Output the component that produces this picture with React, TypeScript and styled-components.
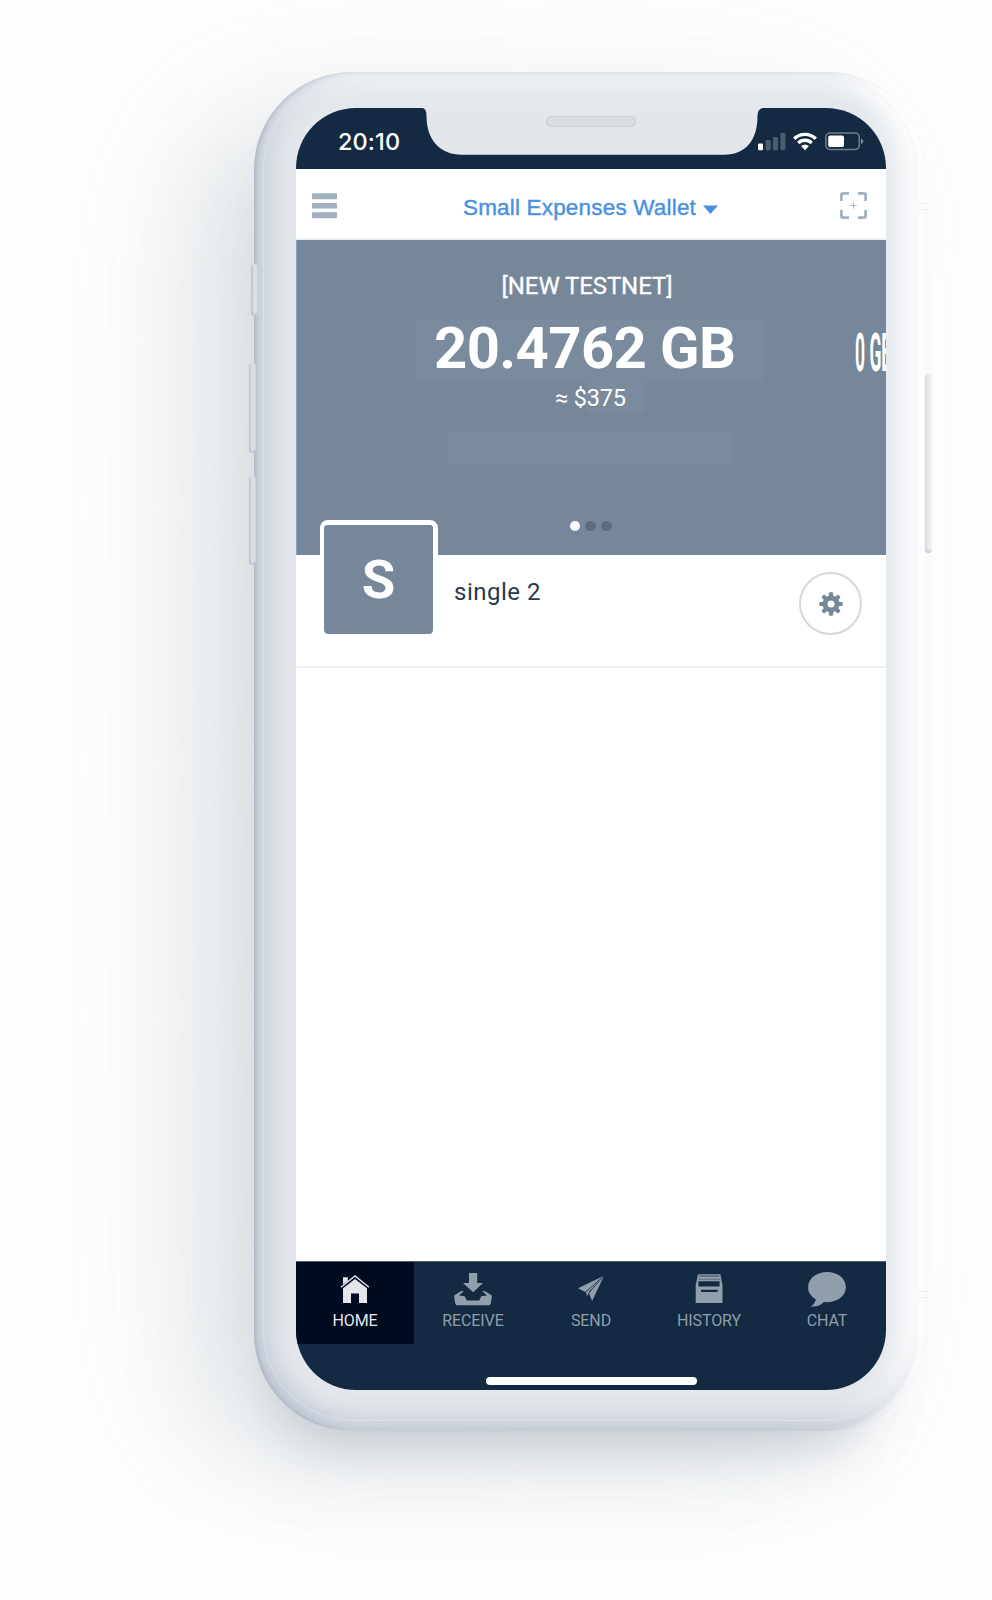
import React from "react";
import styled, { createGlobalStyle } from "styled-components";

const Global = createGlobalStyle`
  * { box-sizing: border-box; }
  body { margin: 0; background: #fefefe; font-family: Roboto, sans-serif; }
`;

const Stage = styled.main`
  width: 992px;
  height: 1600px;
  padding: 72px 0 0 254px;
  overflow: hidden;
`;

const Phone = styled.div`
  position: relative;
  width: 671px;
  height: 1359px;
  padding: 36px 0 0 42px;
  border-radius: 98px;
  background: #e4e8ec;
  box-shadow:
    -70px 40px 100px -20px rgba(140, 152, 165, 0.19),
    -70px 30px 180px -10px rgba(140, 152, 165, 0.15),
    -14px 52px 54px -42px rgba(125, 136, 158, 0.38),
    inset 3px 0 4px -1px rgba(150, 160, 175, 0.55),
    inset -9px 0 5px -2px rgba(255, 255, 255, 0.8),
    inset 16px -4px 26px -2px rgba(176, 185, 201, 0.6),
    inset 0 -20px 24px -8px rgba(182, 189, 203, 0.55),
    inset -28px 0 26px -4px #ffffff,
    inset 0 16px 18px -2px rgba(244, 246, 248, 0.9);

  &::after {
    content: "";
    position: absolute;
    inset: 7px 8px 10px 9px;
    border-radius: 90px;
    border: 1px solid rgba(232, 236, 243, 0.5);
    pointer-events: none;
  }
`;

const SideKey = styled.i<{ $top: number; $height: number; $left: number; $pale?: boolean }>`
  position: absolute;
  left: ${(p) => p.$left}px;
  top: ${(p) => p.$top}px;
  width: 7px;
  height: ${(p) => p.$height}px;
  border-radius: 4px;
  background: ${(p) =>
    p.$pale
      ? "linear-gradient(90deg, #dde1e8, #e6e9ef 50%, #fbfbfc)"
      : "linear-gradient(90deg, #bcc4d0, #dde1e7 45%, #d8dde4)"};
  box-shadow: inset 0 -2px 2px rgba(160, 170, 188, 0.45);
`;

const AntennaBand = styled.i<{ $top: number }>`
  position: absolute;
  right: -3px;
  top: ${(p) => p.$top}px;
  width: 10px;
  height: 7px;
  border: solid #eceef1;
  border-width: 1px 0;
`;

const Screen = styled.div`
  position: relative;
  display: flex;
  flex-direction: column;
  width: 590px;
  height: 1282px;
  overflow: hidden;
  border-radius: 60px;
  background: #fff;
`;

const StatusBar = styled.header`
  display: flex;
  align-items: center;
  height: 61px;
  padding: 5px 22px 0 42px;
  background: #132a42;
  color: #fff;
  flex: none;
`;

const Clock = styled.time`
  flex: 1;
  padding-top: 1px;
  font: 500 23.5px/30px Inter, sans-serif;
  letter-spacing: 0.1px;
`;

const Notch = styled.svg`
  position: absolute;
  left: 126px;
  top: -1px;
`;

const WalletBar = styled.nav`
  display: flex;
  align-items: center;
  justify-content: space-between;
  height: 71px;
  padding: 4px 19px 0 16px;
  border-bottom: 2px solid #edf0f3;
  flex: none;
`;

const WalletName = styled.h1`
  display: flex;
  align-items: center;
  gap: 7px;
  margin: 5px 0 0 4px;
  font: 400 22.5px/30px "Liberation Sans", sans-serif;
  letter-spacing: 0.18px;
  color: #4a90e2;
  -webkit-text-stroke: 0.4px #4a90e2;
  white-space: nowrap;
`;

const Caret = styled.svg`
  margin-top: 3px;
`;

const Balance = styled.section`
  position: relative;
  height: 315px;
  padding-top: 31px;
  background: #768799;
  border-left: 1px solid #86a0be;
  color: #fff;
  flex: none;
`;

const Network = styled.div`
  width: 580px;
  font-size: 24px;
  font-weight: 400;
  letter-spacing: -0.1px;
  line-height: 30px;
  text-align: center;
  -webkit-text-stroke: 0.3px #fff;
`;

const Amount = styled.div`
  width: 348px;
  height: 62px;
  margin: 19px 0 0 119px;
  padding-left: 18px;
  background: #7a8b9d;
  font-size: 58px;
  font-weight: 700;
  letter-spacing: -0.6px;
  line-height: 56px;
  white-space: nowrap;
`;

const Fiat = styled.div`
  display: flex;
  width: max-content;
  height: 30px;
  margin-left: 258px;
  font-size: 23.5px;
  letter-spacing: -0.2px;
  line-height: 32px;
  white-space: pre;
`;

const FiatValue = styled.span`
  width: 58px;
  background: #7a8b9d;
`;

const Placeholder = styled.div`
  width: 284px;
  height: 32px;
  margin: 20px 0 0 151px;
  background: #7a8b9d;
`;

const Dots = styled.div`
  display: flex;
  gap: 5px;
  margin: 56.5px 0 0 272.7px;
`;

const Dot = styled.i<{ $on?: boolean }>`
  width: 10.8px;
  height: 10.8px;
  border-radius: 50%;
  background: ${(p) => (p.$on ? "#fff" : "#5b6c7f")};
`;

const NextAmount = styled.div`
  position: absolute;
  left: 558px;
  top: 83px;
  font-size: 53px;
  font-weight: 700;
  line-height: 60px;
  white-space: nowrap;
  transform: scaleX(0.33);
  transform-origin: 0 50%;
`;

const Account = styled.section`
  position: relative;
  display: flex;
  align-items: flex-start;
  height: 113px;
  padding: 0 24px 0 24px;
  border-bottom: 2px solid #eceef0;
  flex: none;
`;

const Avatar = styled.div`
  width: 118px;
  height: 118px;
  margin-top: -35px;
  border: solid #fff;
  border-width: 5px 5px 4px 4px;
  border-radius: 8px;
  background: #768799;
  background-clip: padding-box;
  box-shadow: inset 0 0 0 1px #fff0;
  color: #fff;
  font-size: 54.5px;
  font-weight: 700;
  line-height: 108px;
  text-align: center;
`;

const AccountName = styled.div`
  flex: 1;
  padding: 21px 0 0 16px;
  font-size: 24px;
  line-height: 32px;
  letter-spacing: 0.5px;
  color: #25394f;
`;

const GearButton = styled.button`
  display: grid;
  place-items: center;
  width: 63px;
  height: 63px;
  margin-top: 17px;
  padding: 0;
  border: 2px solid #d3d8df;
  border-radius: 50%;
  background: #fff;
`;

const Content = styled.div`
  flex: 1;
`;

const TabBar = styled.footer`
  display: grid;
  grid-template-columns: repeat(5, 1fr);
  align-items: start;
  height: 129px;
  border-top: 1px solid #50616f;
  background: #132a42;
  position: relative;
`;

const Tab = styled.a<{ $active?: boolean }>`
  display: flex;
  flex-direction: column;
  align-items: center;
  height: 82px;
  padding-top: 8px;
  background: ${(p) => (p.$active ? "#000a20" : "transparent")};
  color: ${(p) => (p.$active ? "#e3e7eb" : "#919eac")};
  font-size: 16px;
  line-height: 22px;
`;

const TabLabel = styled.span`
  margin-top: 2px;
  letter-spacing: -0.1px;
`;

const HomeIndicator = styled.i`
  position: absolute;
  left: 190px;
  bottom: 5px;
  width: 211px;
  height: 8px;
  border-radius: 4px;
  background: #fff;
`;

const gearTeeth = [0, 45, 90, 135, 180, 225, 270, 315];

const tabs = [
  {
    label: "HOME",
    art: (
      <g>
        <path d="M8 18.3 20 9l12 9.3V33h-8v-9.6h-8V33H8z" />
        <path d="M6 17.3 20 6l14 11.3" fill="none" stroke="currentColor" strokeWidth="1.4" />
        <path d="M8 7.2h4.8v3.7L8 14.6z" />
      </g>
    ),
  },
  {
    label: "RECEIVE",
    art: (
      <g>
        <path d="M16 3h8.2v10H30L20.2 22.3 10 13h6z" />
        <path d="M10.8 21H8.4L1.8 25Q1 25.600 1.200 27L2 32.500Q2.300 35.200 4.600 35.200H35.400Q37.700 35.200 38 32.500L38.800 27Q39 25.600 38.200 25L31.600 21H29.200L34 25.500 28.200 26.300 26.300 30.400H13.700L11.800 26.300 6 25.500z" />
      </g>
    ),
  },
  {
    label: "SEND",
    art: (
      <g>
        <path d="M32.5 6 7 18.3l7.2 3.6z" />
        <path d="M32.800 6.200 18 23.200 21.100 31z" />
        <path d="M14.900 22.200 16.200 26.200 18 21.800 30.500 8.500z" />
      </g>
    ),
  },
  {
    label: "HISTORY",
    art: (
      <g>
        <path d="M10.3 5.500h19.8v4.900H10.300z" opacity=".6" />
        <path
          fillRule="evenodd"
          d="M9 4.2h22.4l2.1 11v17.9H6.7V15.2zM10.3 5.5v1.400h19.8V5.5zM9.800 8.800v1h20.800v-1zM9.4 11.2v5.4h21.2v-5.4zM12 19.7v2.2h16.6v-2.2z"
        />
      </g>
    ),
  },
  {
    label: "CHAT",
    art: (
      <path d="M20.2 2C9.5 2 1.1 8.500 1.100 17.200c0 5.300 3 9.200 7.700 12-.4 3.400-2.300 5.600-5.300 7.300 5.600.5 10.400-.8 13.200-4.500 12.200 1.300 22.200-5.500 22.200-14.800C38.900 8.500 30.700 2 20.200 2z" />
    ),
  },
];

function StatusIcons() {
  return (
    <svg width="108" height="22" viewBox="756 130 108 22">
      <g fill="#fff">
        <rect x="758" y="143.4" width="5" height="6.8" rx="1.3" />
        <g opacity=".24">
          <rect x="765.7" y="140" width="5" height="10.2" rx="1.2" />
          <rect x="773" y="137" width="5" height="13.2" rx="1.2" />
          <rect x="780.4" y="133" width="5" height="17.2" rx="1.2" />
        </g>
      </g>
      <g fill="none" stroke="#fff" strokeWidth="3.4">
        <path d="M794.2 138.8a15.4 15.4 0 0 1 21.6 0" />
        <path d="M798.3 143a9.5 9.5 0 0 1 13.4 0" />
      </g>
      <path d="m805 150.2-3.9-4.1a5.7 5.7 0 0 1 7.8 0z" fill="#fff" />
      <rect x="825.9" y="133" width="33.4" height="16.4" rx="4.2" fill="none" stroke="#fff" strokeOpacity=".4" strokeWidth="1.5" />
      <rect x="828.2" y="135.4" width="15.8" height="11.6" rx="1.8" fill="#fff" />
      <path d="M861 138.4q2.4 1.4 2.4 2.9t-2.4 2.9z" fill="#fff" opacity=".45" />
    </svg>
  );
}

export default function App() {
  return (
    <>
      <Global />
      <Stage>
        <Phone>
          <SideKey $left={-3} $top={192} $height={52} />
          <SideKey $left={-5} $top={291} $height={90} />
          <SideKey $left={-5} $top={404} $height={89} />
          <SideKey $left={671} $top={302} $height={179} $pale />
          <AntennaBand $top={131} />
          <AntennaBand $top={1219} />
          <Screen>
            <StatusBar>
              <Clock>20:10</Clock>
              <StatusIcons />
            </StatusBar>
            <Notch width="340" height="50" viewBox="0 0 340 50">
              <path
                d="M0 0v1q4.500 .2 4.500 8C4.500 33 18 47.700 40 47.700h262c22 0 33.500-14.700 33.500-38.700q0-7.800 6-8V0z"
                fill="#e3e6ea"
              />
              <rect x="124.600" y="9.500" width="89" height="10" rx="5" fill="#d9dee2" stroke="#cbd1d6" strokeWidth="1.2" />
            </Notch>
            <WalletBar>
              <svg width="25" height="26" viewBox="0 0 25 26" fill="#a3b0bf">
                <rect width="25" height="6" y=".3" rx=".8" />
                <rect width="25" height="5.5" y="10" rx=".8" />
                <rect width="25" height="6" y="19.2" rx=".8" />
              </svg>
              <WalletName>
                Small Expenses Wallet
                <Caret width="15" height="9" viewBox="0 0 15 9">
                  <path d="M0 .5h15L7.5 9z" fill="#4a90e2" />
                </Caret>
              </WalletName>
              <svg width="27" height="27" viewBox="0 0 27 27" fill="none" stroke="#a3b0bf">
                <path
                  strokeWidth="2.8"
                  d="M1.4 9V3.2q0-1.8 1.8-1.8H9M18 1.4h5.8q1.8 0 1.8 1.8V9M25.6 18v5.8q0 1.8-1.8 1.8H18M9 25.6H3.2q-1.8 0-1.8-1.8V18"
                />
                <path d="M13.5 10.3v6.4M10.3 13.5h6.4" />
              </svg>
            </WalletBar>
            <Balance>
              <Network>[NEW TESTNET]</Network>
              <Amount>20.4762 GB</Amount>
              <Fiat>
                ≈ $<FiatValue>375</FiatValue>
              </Fiat>
              <Placeholder />
              <Dots>
                <Dot $on />
                <Dot />
                <Dot />
              </Dots>
              <NextAmount>0 GB</NextAmount>
            </Balance>
            <Account>
              <Avatar>S</Avatar>
              <AccountName>single 2</AccountName>
              <GearButton aria-label="Settings">
                <svg width="24" height="24" viewBox="-12 -12 24 24">
                  {gearTeeth.map((a) => (
                    <rect key={a} x="-2.1" y="-11.7" width="4.2" height="6" rx="1" transform={`rotate(${a})`} fill="#768799" />
                  ))}
                  <circle r="6" fill="none" stroke="#768799" strokeWidth="5" />
                </svg>
              </GearButton>
            </Account>
            <Content />
            <TabBar>
              {tabs.map((t, i) => (
                <Tab key={t.label} $active={i === 0}>
                  <svg width="40" height="38" viewBox="0 0 40 38" fill="currentColor">
                    {t.art}
                  </svg>
                  <TabLabel>{t.label}</TabLabel>
                </Tab>
              ))}
              <HomeIndicator />
            </TabBar>
          </Screen>
        </Phone>
      </Stage>
    </>
  );
}
